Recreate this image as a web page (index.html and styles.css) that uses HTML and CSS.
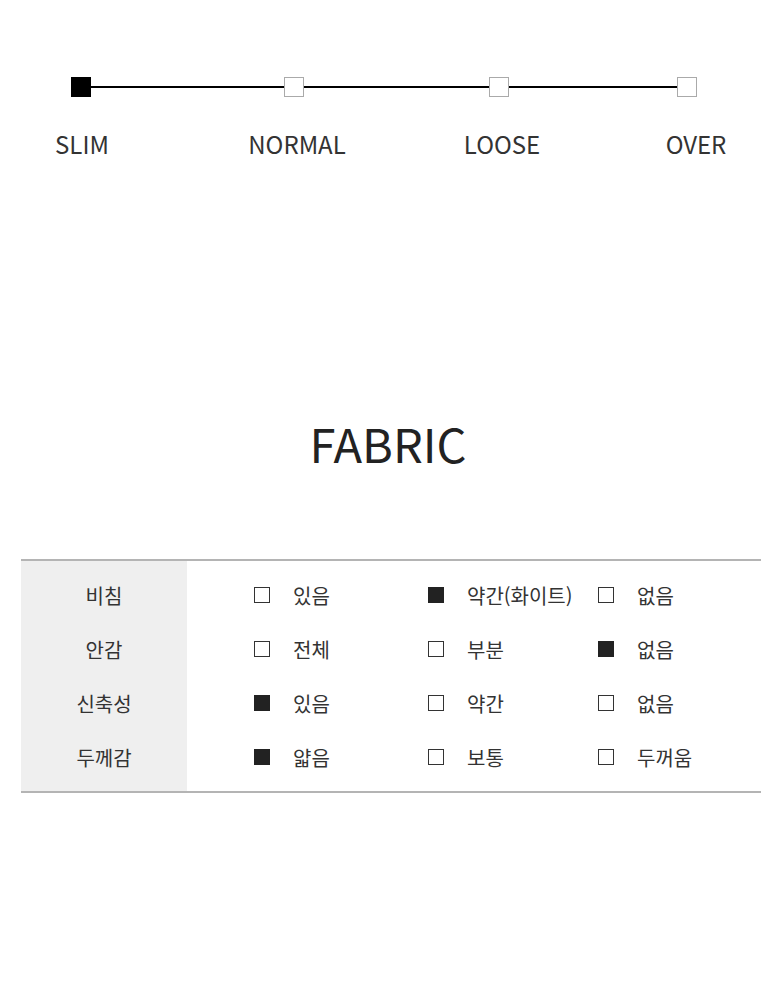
FILE: index.html
```html
<!DOCTYPE html>
<html lang="ko">
<head>
<meta charset="utf-8">
<link rel="stylesheet" href="styles.css">
</head>
<body>
<section class="fit">
  <div class="track">
    <span class="dot dot-on"></span>
    <span class="seg seg-1"></span>
    <span class="dot"></span>
    <span class="seg seg-2"></span>
    <span class="dot"></span>
    <span class="seg seg-3"></span>
    <span class="dot"></span>
  </div>
  <div class="labels">
    <span class="lab lab-1">SLIM</span>
    <span class="lab lab-2">NORMAL</span>
    <span class="lab lab-3">LOOSE</span>
    <span class="lab lab-4">OVER</span>
  </div>
</section>

<h2 class="title">FABRIC</h2>

<div class="fabric">
  <div class="heads">
    <div class="head">비침</div>
    <div class="head">안감</div>
    <div class="head">신축성</div>
    <div class="head">두께감</div>
  </div>
  <div class="opts">
    <div class="opt"><span class="box"></span>있음</div>
    <div class="opt"><span class="box box-on"></span>약간(화이트)</div>
    <div class="opt"><span class="box"></span>없음</div>

    <div class="opt"><span class="box"></span>전체</div>
    <div class="opt"><span class="box"></span>부분</div>
    <div class="opt"><span class="box box-on"></span>없음</div>

    <div class="opt"><span class="box box-on"></span>있음</div>
    <div class="opt"><span class="box"></span>약간</div>
    <div class="opt"><span class="box"></span>없음</div>

    <div class="opt"><span class="box box-on"></span>얇음</div>
    <div class="opt"><span class="box"></span>보통</div>
    <div class="opt"><span class="box"></span>두꺼움</div>
  </div>
</div>
</body>
</html>
```

FILE: styles.css
```css
* { box-sizing: border-box; }

html, body {
  margin: 0;
  padding: 0;
  background: #fff;
}

body {
  width: 780px;
  height: 986px;
  overflow: hidden;
  font-family: "Noto Sans CJK KR", "Noto Sans", sans-serif;
  color: #333;
}

.fit {
  padding-top: 77px;
}

.track {
  display: flex;
  align-items: center;
  padding-left: 71px;
  height: 20px;
}

.dot {
  width: 20px;
  height: 20px;
  flex: none;
  background: #fff;
  border: 1px solid #aaa;
}

.dot-on {
  background: #000;
  border-color: #000;
}

.seg {
  height: 2px;
  background: #000;
  flex: none;
}
.seg-1 { width: 193px; }
.seg-2 { width: 185px; }
.seg-3 { width: 168px; }

.labels {
  display: flex;
  padding-left: 32px;
  margin-top: 32px;
  font-size: 24px;
  line-height: 30px;
  color: #333;
}

.lab {
  width: 100px;
  flex: none;
  text-align: center;
  white-space: nowrap;
}
.lab-2 { margin-left: 115px; }
.lab-3 { margin-left: 105px; }
.lab-4 { margin-left: 94px; }

.title {
  margin: 254px 0 0;
  text-align: center;
  font-weight: 400;
  font-size: 47px;
  line-height: 60px;
  color: #222;
  padding-right: 4px;
}

.fabric {
  display: flex;
  margin: 86px 19px 0 21px;
  border-top: 2px solid #b4b4b4;
  border-bottom: 2px solid #b4b4b4;
  font-size: 20px;
  color: #333;
}

.heads {
  width: 166px;
  background: #efefef;
  padding: 7px 0;
}

.head {
  height: 54px;
  display: flex;
  align-items: center;
  justify-content: center;
}

.opts {
  flex: 1;
  display: grid;
  grid-template-columns: 174px 170px 1fr;
  grid-auto-rows: 54px;
  padding: 7px 0 7px 67px;
}

.opt {
  display: flex;
  align-items: center;
  white-space: nowrap;
}

.box {
  width: 16px;
  height: 16px;
  flex: none;
  border: 1px solid #333;
  background: #fff;
  margin-right: 23px;
}

.box-on {
  background: #222;
  border-color: #222;
}
```
